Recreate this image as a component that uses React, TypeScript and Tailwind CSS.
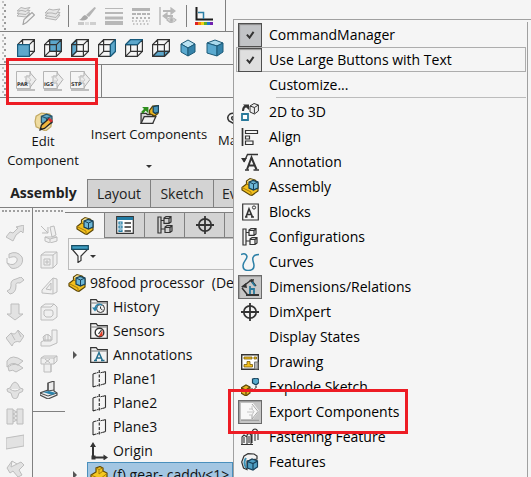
import type { ReactNode } from 'react';

const INK = '#333333';

interface IconProps {
  size?: number;
  children: ReactNode;
}

function Icon({ size = 18, children }: IconProps) {
  return (
    <svg
      width={size}
      height={size}
      viewBox="0 0 18 18"
      fill="none"
      stroke={INK}
      strokeWidth="1.2"
      className="shrink-0"
      aria-hidden="true"
    >
      {children}
    </svg>
  );
}

/* ---------- faded toolbar icons ---------- */

const sheets = (
  <g stroke="#b4b4b4" fill="#e6e6e6" strokeWidth="1">
    <path d="M1 11l5-4 10 1-4 5z" />
    <path d="M1 8.500l5-4 10 1-4 5z" />
    <path d="M1 6l4-4 4 1 7-1-4 5-4-1z" />
  </g>
);

const sheetsEdit = (
  <>
    <g stroke="#b4b4b4" fill="#e6e6e6" strokeWidth="1">
      <path d="M0 9l4-4 9 1-4 4z" />
      <path d="M0 6.500l4-4 9 1-4 4z" />
      <path d="M0 4l4-3.500 4 1 5-1-4 4-4-1z" />
    </g>
    <path d="M6 17.500l1-5 8-7 2.500 2.500-8 7.500z" stroke="#a4a4a4" fill="#f5f5f5" />
  </>
);

const brush = (
  <g stroke="none">
    <path d="M16.500 0l1.500 1-7 9-3-2z" fill="#b4b4b4" />
    <path d="M7 8l3 2c0 3-4 4-9 3 3-1 3-4 6-5z" fill="#a8a8a8" />
    <path d="M0 15h6v3H0z" fill="#c8c8c8" />
    <path d="M7 15h4v3H7z" fill="#dcdcdc" />
    <path d="M12 15h6v3h-6z" fill="#cfcfcf" />
  </g>
);

const lineWeights = (
  <g stroke="#b8b8b8">
    <path d="M0 1.500h18" strokeWidth="1" />
    <path d="M0 6h18" strokeWidth="2" />
    <path d="M0 11h18" strokeWidth="3" />
    <path d="M0 16h18" strokeWidth="4" />
  </g>
);

const lineStyles = (
  <g stroke="#b4b4b4">
    <path d="M0 2.500h18" strokeWidth="3" />
    <path d="M0 7h18" strokeWidth="2" strokeDasharray="4 1" />
    <path d="M0 11h18" strokeWidth="2" strokeDasharray="2 2" />
    <path d="M0 14h18M1 17h16" strokeWidth="1.500" strokeDasharray="1.500 2" />
  </g>
);

const hideShow = (
  <g stroke="#b8b8b8">
    <path d="M1 0v18" strokeWidth="1.500" />
    <path d="M4 4h9M5 9h9" strokeWidth="2" />
    <path d="M12 1l4 3-4 3zM8 6L4 9l4 3z" fill="#b8b8b8" />
    <path d="M8 13q4-5 9 0-4 5-9 0z" fill="#e2e2e2" />
    <circle cx="12.500" cy="13" r="1.500" fill="#b0b0b0" />
  </g>
);

const colorDisplay = (
  <>
    <path d="M1.500 0v12.500H18" stroke="#1d1d1d" strokeWidth="2" />
    <path d="M3 5.500h5.500V12" stroke="#2b7fa6" strokeWidth="1.500" />
    <g stroke="none">
      <path d="M0 15h3v3H0z" fill="#e02020" />
      <path d="M3 15h3v3H3z" fill="#f08010" />
      <path d="M6 15h3v3H6z" fill="#f0d010" />
      <path d="M9 15h3v3H9z" fill="#58b030" />
      <path d="M12 15h3v3h-3z" fill="#2074d0" />
      <path d="M15 15h3v3h-3z" fill="#7020b0" />
    </g>
  </>
);

/* ---------- view orientation cubes ---------- */

const CUBE_EDGES =
  'M.600 5.600h11.800v11.800H.600zM5.600.600h11.800v11.800H5.600zM.600 5.600l5-5M12.400 5.600l5-5M12.400 17.400l5-5M.600 17.400l5-5';

// faces turned to the viewer cover the edges behind them
function ViewCube({ face, behind }: { face: string; behind?: boolean }) {
  return (
    <Icon>
      {behind && <path d={face} fill="#5da7cb" stroke="#175a7c" />}
      <path d={CUBE_EDGES} />
      {!behind && <path d={face} fill="#5da7cb" stroke="#175a7c" />}
    </Icon>
  );
}

const views = [
  { name: 'Front', face: 'M.600 5.600h11.800v11.800H.600z' },
  { name: 'Back', face: 'M5.600.600h11.800v11.800H5.600z', behind: true },
  { name: 'Left', face: 'M.600 5.600l5-5v11.800l-5 5z', behind: true },
  { name: 'Right', face: 'M12.400 5.600l5-5v11.800l-5 5z' },
  { name: 'Top', face: 'M.600 5.600l5-5h11.800l-5 5z' },
  { name: 'Bottom', face: 'M.600 17.400l5-5h11.800l-5 5z', behind: true },
];

const isoCube = (
  <g stroke="#1d5a78" strokeWidth="1">
    <path d="M9 1l7 4-7 4-7-4z" fill="#b9e2f2" />
    <path d="M2 5l7 4v8l-7-4z" fill="#5aa9cf" />
    <path d="M16 5L9 9v8l7-4z" fill="#3583aa" />
  </g>
);

const dimetricCube = (
  <g stroke="#1d5a78" strokeWidth="1">
    <path d="M1 4l8-3 8 3-6 3z" fill="#a9d9ec" />
    <path d="M1 4l10 3v10L1 14z" fill="#5aa9cf" />
    <path d="M17 4l-6 3v10l6-4z" fill="#3583aa" />
  </g>
);

/* ---------- assembly and tree icons ---------- */

const assembly = (
  <>
    <path d="M1 9.500L5.500 6V3L9 .700l5 1.300 3 3v8l-6 4.300-2-.300-8-5z" fill="#f3c01d" stroke="#5c4708" />
    <path d="M1 9.500l9 4.500v3M5.500 6l3 1.500" stroke="#a87c0b" strokeWidth="1" />
    <path d="M6 3.500L9 1.300l4 .700-4 1.500v3.500z" fill="#fbe7a0" stroke="none" />
    <path d="M8 4l4-1.500L17 4v6l-4.500 2L8 10z" fill="#6db7d6" stroke="#17415a" />
    <path d="M8 4l4.500 2L17 4M12.500 6v6" stroke="#17415a" strokeWidth="1" />
  </>
);

const part = (
  <>
    <path d="M1 9l5-3V2l4-1.500L13 2v3l4 2v5l-7 5-9-4.500z" fill="#f5c81f" stroke="#5c4708" />
    <path d="M1 9l9 4v4M10 13l7-5.500M6 2l3 1.500L13 2M9 3.500V8l4-3" stroke="#a87c0b" strokeWidth="1" />
  </>
);

const folder = <path d="M.700 16.300V1.700h5.500l1.500 2h9.600v12.600z" fill="#f2f2f2" />;

const historyFolder = (
  <>
    {folder}
    <path d="M.700 5h16.600" stroke="#8d8d8d" />
    <circle cx="10.500" cy="10.500" r="4" strokeWidth="1" />
    <path d="M10.500 8.500v2l2 1.500" strokeWidth="1" />
    <path d="M12 7Q7 4.500 5 10" stroke="#2c84ad" strokeWidth="1.600" />
    <path d="M2 9.500h6l-3 4z" fill="#2c84ad" stroke="none" />
  </>
);

const sensorFolder = (
  <>
    {folder}
    <path d="M.700 5h16.600" stroke="#8d8d8d" />
    <circle cx="9.500" cy="10.500" r="4.300" fill="#fff" strokeWidth="1.400" />
    <path d="M12.500 8v6l-4 .500z" fill="#e03a22" stroke="none" />
    <path d="M8.500 12l3-4" />
  </>
);

const annotationFolder = (
  <>
    {folder}
    <path d="M.700 5h16.600" stroke="#8d8d8d" />
    <path d="M5.500 14.500L9 6.500l3.500 8M7 12h4M4 14.500h3M11 14.500h3.500" stroke="#24708f" strokeWidth="1.500" />
  </>
);

const plane = (
  <>
    <path d="M3 4v13M3 4l3-1M3 17l3-1M15.500 1.500v12M15.500 1.500l-3 1M15.500 13.500l-3 1" strokeWidth="1.100" />
    <path d="M9.300 0v18" strokeDasharray="3 1.500" />
    <path d="M6.500 3l2-.700M6.500 16l2-.700M10.500 2.800l2-.600M10.500 15l2-.600" strokeWidth="1" />
  </>
);

const origin = (
  <>
    <path d="M3 3v12.500h11" strokeWidth="2" />
    <path d="M0 5l3-5 3 5zM13.500 12.500l4.500 3-4.500 3zM1.500 13.500h4v4h-4z" fill={INK} stroke="none" />
  </>
);

const propertySheet = (
  <>
    <path d="M.700.700h16.600v16.600H.700z" fill="#fff" />
    <path d="M1 1h16v3H1z" fill="#217ba3" stroke="none" />
    <path d="M3 6h3v2H3zM3 10h3v2H3zM3 14h3v1.500H3z" stroke="#217ba3" />
    <path d="M8.500 7h6.500M8.500 11h6.500M8.500 15h6.500" strokeWidth="1.400" />
  </>
);

const configurations = (
  <>
    <path d="M2 1h3v16H2zM5 4.500h3M5 13h4" />
    <path d="M8 2l2-1.300h5V6l-2 1.300H8zM8 2.500h5v4.500M13 2.500L15 1" />
    <path d="M9 11l2-1.300h5V15l-2 1.500H9zM9 11.500h5v5M14 11.500l2-1.500" />
  </>
);

const target = (
  <>
    <circle cx="9" cy="9" r="6.200" strokeWidth="1.700" />
    <path d="M9 0v18M0 9h18" strokeWidth="1.800" />
  </>
);

const funnel = (
  <>
    <path d="M1 4l6 7v6.500l3-2V11l7-7z" fill="#fafafa" />
    <path d="M.700.700h16.600v3.600H.700z" fill="#3d9cc0" stroke="#174a60" />
  </>
);

/* ---------- command manager icons ---------- */

const editComponent = (
  <>
    <path d="M1 9l1-5 5-3 8 1 2 4-1 8-5 4-9-4z" fill="#efdca0" stroke="#c3aa63" />
    <path d="M7 4l5-2 5 2v6l-5 3-5-3z" fill="#63abc9" stroke="#28566c" />
    <path d="M7 4l5 2 5-2M12 6v6" stroke="#28566c" />
    <path d="M6 16.500l1-4 7-6 3 3-7 6z" fill="#efb73d" stroke="#222" />
    <path d="M13 7l2-1.500 3 3-2 1.500z" fill="#d93030" stroke="none" />
    <path d="M5 18l1-3.500 2.500 2z" fill="#222" stroke="none" />
  </>
);

const insertComponent = (
  <>
    <path d="M1 8v9.500h11V9H7L6 8z" fill="#d2d2d2" />
    <path d="M1 17.500L4 11h11l-3 6.500z" fill="#f2f2f2" />
    <path d="M2 7.500L5 4" stroke="#2f8f1e" strokeWidth="2.400" />
    <path d="M2 2h6v6z" fill="#2f8f1e" stroke="none" />
    <path d="M9 5l3-4 5-.400V8l-3 2.500L9 8z" fill="#eeb722" stroke="#5c4708" />
    <path d="M12.500 1.500L17.500.600v6l-3 1.400-2-1.500z" fill="#4a97ba" stroke="#17415a" />
  </>
);

const mate = (
  <path
    d="M14 15L3 9Q0 5 4 2q4-2 7 2l5 6M13 14L6 7Q5 4 8 5l4 5"
    strokeWidth="1.500"
  />
);

/* ---------- popup menu icons ---------- */

const twoToThree = (
  <>
    <path d="M1 11h6v6H1z" fill="#fff" stroke="#28799b" strokeWidth="1.800" />
    <path d="M2 8q0-4 3-5" strokeWidth="2" />
    <path d="M2 1.500h6V7z" fill={INK} stroke="none" />
    <path d="M9 3l4-2.500L17.400 2v6l-4 3L9 9zM9 3l4.400 1.500v6M13.400 4.500l4-2.500" strokeWidth="1" fill="#eee" />
  </>
);

const align = (
  <>
    <path d="M1.500 0v18" strokeWidth="1.700" />
    <path d="M4.500 2.500h12v3h-12zM4.500 8h4v3h-4zM4.500 13h7.500v3.500H4.500z" />
  </>
);

const annotation = (
  <>
    <path d="M3 9L6.500 1.500H17" strokeWidth="1.400" />
    <path d="M0 5h6L3 9.500z" fill={INK} stroke="none" />
    <path d="M6 16.500L10.500 4.500l5 12M8 12.500h6" strokeWidth="2" />
    <path d="M4 17h4M12.500 17H18" strokeWidth="1.500" />
  </>
);

const blocks = (
  <>
    <path d="M1.700 1h15.600v16H1.700z" />
    <path d="M5 14l3-8 3.500 8M6 11.500h4M4 14h2.500M10 14h3" strokeWidth="1.600" />
    <circle cx="13" cy="4.500" r="1.600" strokeWidth="1" />
  </>
);

const curves = (
  <path
    d="M0 1.500q5-2 6 2c0 3-4 5-4 9q0 5 5 5 6 0 6-5c0-3-2-5-1-8q1-3 6-3"
    stroke="#2b7fa6"
    strokeWidth="1.500"
  />
);

const dimensions = (
  <>
    <path d="M1 9l10-7.500M1 10l6 7.500M10 2l5 6" strokeWidth="1.500" />
    <path d="M0 9l5-4 1 5zM8 2l5-1-1 5z" fill={INK} stroke="none" />
    <path d="M11 4l3 4M9 8v8M9 11h4v5" stroke="#28799b" strokeWidth="1.800" />
    <path d="M5 17h13" strokeWidth="2" />
  </>
);

const drawing = (
  <>
    <path d="M.700 1.700h16.600v14.600H.700z" fill="#fff" strokeWidth="1.400" />
    <path d="M3 4h8v2H3zM13 4h2.500v2H13z" fill="#f3c01d" stroke="#7a5c07" strokeWidth=".8" />
    <path d="M6 8.500h3v3h2.500V14H3v-2.500h3z" fill="#f3c01d" stroke="#7a5c07" strokeWidth=".8" />
    <path d="M13.500 9H17v7h-3.500z" fill="#b5b5b5" stroke="#777" strokeWidth="1" />
  </>
);

const explode = (
  <>
    <path d="M0 10l5-3 4 2v6l-4 3-5-3z" fill="#e7b322" stroke="#5c4708" />
    <path d="M0 10l5 2 4-3M5 12v5" stroke="#5c4708" />
    <path d="M11.500 1l4-1L18 1.500v3L15 7l-3.500-2z" fill="#57a9cd" stroke="#17415a" />
    <path d="M15 8v3H9" strokeDasharray="2 1" />
  </>
);

const exportArrow = (
  <>
    <path d="M0 0h12l6 8-6 8H0z" fill="#f8f8f8" stroke="none" />
    <path d="M11 1l6 7.500-6 7.500v-4" stroke="#a5a5a5" strokeWidth="1" />
    <path d="M8 6h4M6 9h7M11 3v3l2 2.500-2 3.500H8" stroke="#c4c4c4" strokeWidth="1" />
    <path d="M0 17.500h18" stroke="#a0a0a0" strokeWidth="1.500" />
  </>
);

const fastening = (
  <>
    <path d="M1 16V9l2-2 3 2v7M6 16V7l2-2 2 2v9M11 15V4q1-3 3-3t3 3v8M14 13V4M3 15V9M8 15V8" strokeWidth="1.100" />
    <path d="M0 16.500h12" strokeWidth="1" />
  </>
);

const features = (
  <>
    <path d="M3 3l4-2.300 6 .300 3 2v3L6 8v8.500L2.500 15 .700 9z" fill="#f2f2f2" />
    <path d="M5 5q-3 4 0 10" stroke="#3b91b5" strokeWidth="2" />
    <path d="M6.500 8.500L11 6l5.500 2v6L12 17l-5.500-2z" fill="#4f9fc3" stroke="#17415a" />
    <path d="M6.500 8.500L12 10.500l4.500-2.500M12 10.500v6" stroke="#17415a" />
  </>
);

const check = <path d="M5.500 8.500l3 3.500 4.500-6.500" strokeWidth="2.200" />;

/* ---------- faded side toolbars ---------- */

const FADED = '#bdbdbd';

const featureTools: { name: string; art: ReactNode }[] = [
  { name: 'Extrude', art: <path d="M0 12l4-5 3 1 5-5-2-1 8-2-1 8-2-2-5 4-3 6z" /> },
  { name: 'Revolve', art: <path d="M3 3q8-4 13 3c3 8-6 13-11 11l-4-5q7 4 10-2c1-5-4-5-8-3zM1 12V7" /> },
  { name: 'Sweep', art: <path d="M1 14q4-1 4-5-1-6 5-7l5-2 3 3-4 3q-5-1-4 3 0 7-6 8z" /> },
  { name: 'Loft', art: <path d="M5 1h8v10h4l-8 6-8-6h4z" /> },
  { name: 'Boundary', art: <path d="M0 9l5-5q4 3 7-3l6 6-4 6q-6-2-8 4zM5 4l4 7M12 2l3 6" /> },
  { name: 'Wrap', art: <path d="M1 6q5-8 16 0l-5 4Q6 6 1 12zM2 12q7-6 15 1l-7 4q-3-3-7-1z" /> },
  { name: 'Dome', art: <path d="M4 7q5-12 10 0l3 1q1 3-4 4-1 6-4 6t-4-6Q0 11 1 8zM4 8q5 4 10 0" /> },
  { name: 'Zip', art: <path d="M1 2h6v15H1zM11 2h6v15h-6zM7 3l4 2-4 2 4 2-4 2 4 2-4 2" /> },
  { name: 'Planar', art: <path d="M0 5l18-3v11L0 16z" /> },
  { name: 'Sweep cut', art: <path d="M1 9l5-7 5 3 4-2 3 3-5 5 3 5-4 2-5-6-3 2zM6 2l-1 6 6-3" /> },
];

const assemblyTools: { name: string; art: ReactNode }[] = [
  { name: 'Smart fasteners', art: <path d="M1 1l7 7M8 2v6H2M10 2l4-1 2 9-4 2zM5 12h12v4l-7 2-5-2zM5 12l5 2 7-2M10 14v3" /> },
  { name: 'Shell', art: <path d="M1 4l4-3h12v12l-4 4H1zM1 4h12l4-3M13 4v13M4 8h6v6H4zM6 10h2v2H6z" /> },
  { name: 'Rib', art: <path d="M2 13L13 1l4 1v13l-4 2-11-1zM13 1v16M6 12l5-6v7z" /> },
  { name: 'Hole', art: <path d="M1 4l4-3h9l3 3v10l-4 3H1zM1 4h10l3-3M5 7h6q2 0 2 2v3l-2 2H6l-2-2V8z" /> },
  { name: 'Mirror', art: <path d="M12 1h5v13l-7 3H1v-4l4-2h7zM3 8q4-5 8 0v4H4zM5 6v6M8 5v7" /> },
  { name: 'Pattern', art: <path d="M1 3l3-2h13v5l-3 3h-3v8H4V9H1zM1 3h13v6M14 3l3-2M5 4l5 4M10 4L5 8M4 9h7v8" /> },
];

const bracket = (
  <>
    <path d="M8 2l6-2v10l3 2v2l-9 4-8-4v-2l8-3z" fill="#ececec" stroke="#4b4b4b" />
    <path d="M8 2v8l6-1M0 12l8 3 9-3" stroke="#4b4b4b" strokeWidth="1" />
    <path d="M3 11l9 3 4-2-7-2z" fill="#2c84ad" stroke="none" />
  </>
);

/* ---------- window parts ---------- */

function Grip() {
  return (
    <div className="flex w-1 shrink-0 flex-col justify-around self-stretch py-px" aria-hidden="true">
      {[0, 1, 2, 3, 4].map(i => (
        <div key={i} className="flex flex-col gap-px">
          <div className="size-0.5 bg-[#c4c4c4]" />
          <div className="size-0.5 self-end bg-[#999]" />
        </div>
      ))}
    </div>
  );
}

function SideGrip() {
  return <div className="mx-auto h-0.5 w-7 border-t-2 border-dotted border-[#a0a0a0]" />;
}

function Tool({ name, children }: { name: string; children: ReactNode }) {
  return (
    <button type="button" aria-label={name} className="flex shrink-0 items-center justify-center">
      {children}
    </button>
  );
}

function Divider() {
  return <div className="h-[22px] w-px shrink-0 bg-[#808080]" />;
}

function ExportTool({ label }: { label: string }) {
  return (
    <Tool name={`Export ${label}`}>
      <svg width="21" height="21" viewBox="0 0 21 21" fill="none" aria-hidden="true">
        <path d="M.500.500h14v17H.500z" fill="#f5f5f5" stroke="#b5b5b5" />
        <path d="M10 5h4V1.500l6 7-6 8V12h-4z" fill="#ededed" stroke="#b0b0b0" />
        <path d="M8 6h5M9 10h5M11 4l4 5-4 4" stroke="#cccccc" />
        <path d="M1 19h18" stroke="#ababab" strokeWidth="1.500" />
        <text x="1" y="15" fontSize="5" fontWeight="700" fill="#333" fontFamily="DejaVu Sans, sans-serif">
          {label}
        </text>
      </svg>
    </Tool>
  );
}

function Toolbars() {
  return (
    <>
      <div className="flex h-8 shrink-0 items-center border-b border-[#808080] pl-0.5">
        <Grip />
        <div className="flex h-full items-center border-r border-[#808080] pr-3 pl-[11px]">
          <div className="flex items-center gap-[9px] pr-1.5">
            <Tool name="Edit layers"><Icon>{sheetsEdit}</Icon></Tool>
            <Tool name="Layers"><Icon>{sheets}</Icon></Tool>
          </div>
          <Divider />
          <div className="flex items-center gap-[9px] px-[9px]">
            <Tool name="Line color"><Icon>{brush}</Icon></Tool>
            <Tool name="Line thickness"><Icon>{lineWeights}</Icon></Tool>
            <Tool name="Line style"><Icon>{lineStyles}</Icon></Tool>
            <Tool name="Hide or show edges"><Icon>{hideShow}</Icon></Tool>
          </div>
          <Divider />
          <div className="pl-2">
            <Tool name="Color display mode"><Icon>{colorDisplay}</Icon></Tool>
          </div>
        </div>
      </div>

      <div className="flex h-[33px] shrink-0 items-center border-b border-[#808080] pl-0.5">
        <Grip />
        <div className="flex items-center gap-[9px] pl-[11px]">
          {views.map(v => (
            <Tool key={v.name} name={v.name}><ViewCube face={v.face} behind={v.behind} /></Tool>
          ))}
          <Tool name="Isometric"><Icon>{isoCube}</Icon></Tool>
          <Tool name="Dimetric"><Icon>{dimetricCube}</Icon></Tool>
        </div>
      </div>

      <div className="flex h-[33px] shrink-0 items-center border-b border-[#808080] pl-0.5">
        <Grip />
        <div className="flex h-full w-24 items-center gap-1.5 border-r border-[#808080] pl-2.5">
          <ExportTool label="PAR" />
          <ExportTool label="IGS" />
          <ExportTool label="STP" />
        </div>
      </div>
    </>
  );
}

function CommandManager() {
  return (
    <>
      <div className="flex h-[81px] shrink-0 items-start text-[13px]">
        <button type="button" className="flex w-[86px] shrink-0 flex-col items-center pt-3.5 leading-[19px]">
          <Icon size={19}>{editComponent}</Icon>
          <span className="pt-px">Edit</span>
          <span>Component</span>
        </button>
        <button type="button" className="flex h-full w-[126px] shrink-0 flex-col items-center pt-[7px] leading-5">
          <Icon size={19}>{insertComponent}</Icon>
          <span className="whitespace-nowrap">Insert Components</span>
          <span className="mt-[21px] border-x-[3px] border-t-[3px] border-x-transparent border-t-[#333]" />
        </button>
        <button type="button" className="flex flex-col items-start pt-3.5 pl-1.5 leading-[19px]">
          <span className="pl-2"><Icon>{mate}</Icon></span>
          <span className="pt-px">Mate</span>
        </button>
      </div>

      <div role="tablist" className="flex h-[29px] shrink-0 border-b border-[#808080]">
        <button type="button" role="tab" aria-selected="true" className="w-[87px] shrink-0 font-bold text-[#222]">
          Assembly
        </button>
        {['Layout', 'Sketch', 'Evaluate'].map(name => (
          <button
            key={name}
            type="button"
            role="tab"
            aria-selected="false"
            className="min-w-[63px] shrink-0 border-t border-l border-[#808080] bg-[#d3d3d3] px-2 text-[#222]"
          >
            {name}
          </button>
        ))}
      </div>
    </>
  );
}

interface TreeRowProps {
  icon: ReactNode;
  label: string;
  arrow?: boolean;
  selected?: boolean;
}

function TreeRow({ icon, label, arrow, selected }: TreeRowProps) {
  return (
    <li className="flex h-6 items-center">
      <span className="flex w-[22px] shrink-0 pl-2">
        {arrow && (
          <span className="border-y-4 border-l-4 border-y-transparent border-l-[#555]" />
        )}
      </span>
      <span
        className={
          selected
            ? 'flex h-[26px] grow items-center gap-[5px] border border-[#4a90bd] bg-[#a3c6e2] pl-0.5'
            : 'flex h-6 grow items-center gap-[5px] pl-[3px]'
        }
      >
        <Icon>{icon}</Icon>
        <span className="whitespace-pre">{label}</span>
      </span>
    </li>
  );
}

const treeRows: TreeRowProps[] = [
  { icon: historyFolder, label: 'History' },
  { icon: sensorFolder, label: 'Sensors' },
  { icon: annotationFolder, label: 'Annotations', arrow: true },
  { icon: plane, label: 'Plane1' },
  { icon: plane, label: 'Plane2' },
  { icon: plane, label: 'Plane3' },
  { icon: origin, label: 'Origin' },
  { icon: part, label: '(f) gear- caddy<1>', arrow: true, selected: true },
];

const managerTabs = [
  { name: 'Property manager', art: propertySheet },
  { name: 'Configuration manager', art: configurations },
  { name: 'DimXpert manager', art: target },
  { name: 'Display manager', art: null },
];

function FeatureManager() {
  return (
    <div className="flex min-w-0 grow flex-col pt-1">
      <div role="tablist" className="flex h-[26px] shrink-0 border-t border-[#808080]">
        <button type="button" role="tab" aria-label="Feature manager" aria-selected="true" className="flex w-[39px] shrink-0 items-center justify-center">
          <Icon>{assembly}</Icon>
        </button>
        {managerTabs.map(tab => (
          <button
            key={tab.name}
            type="button"
            role="tab"
            aria-label={tab.name}
            aria-selected="false"
            className="flex w-10 shrink-0 items-center justify-center border-b border-l border-[#808080] bg-[#d3d3d3]"
          >
            {tab.art && <Icon>{tab.art}</Icon>}
          </button>
        ))}
      </div>

      <div className="ml-[3px] flex h-8 shrink-0 items-center border-y border-l border-[#bcbcbc] pl-0.5">
        <button type="button" aria-label="Filter" className="flex items-center gap-px">
          <Icon>{funnel}</Icon>
          <span className="mt-1 border-x-[3px] border-t-[3px] border-x-transparent border-t-[#333]" />
        </button>
      </div>

      <div className="flex h-[25px] shrink-0 items-center gap-1 pt-px pl-[3px]">
        <Icon>{assembly}</Icon>
        <span className="whitespace-pre">98food processor  (Default)</span>
      </div>
      <ul>
        {treeRows.map(row => (
          <TreeRow key={row.label} {...row} />
        ))}
      </ul>
    </div>
  );
}

function SideToolbars() {
  return (
    <>
      <div className="flex w-[33px] shrink-0 flex-col border-r border-[#808080] pt-0.5">
        <SideGrip />
        <div className="flex flex-col items-center gap-2 pt-[13px] pr-0.5">
          {featureTools.map(t => (
            <Tool key={t.name} name={t.name}>
              <Icon>
                <g stroke={FADED} fill="#e2e2e2" strokeWidth="1">{t.art}</g>
              </Icon>
            </Tool>
          ))}
        </div>
      </div>
      <div className="w-8 shrink-0 pt-0.5">
        <SideGrip />
        <div className="flex flex-col items-center gap-2 border-b border-[#808080] pt-[13px] pb-3">
          {assemblyTools.map(t => (
            <Tool key={t.name} name={t.name}>
              <Icon>
                <g stroke={FADED} fill="#efefef" strokeWidth="1">{t.art}</g>
              </Icon>
            </Tool>
          ))}
          <Tool name="Bracket"><Icon>{bracket}</Icon></Tool>
        </div>
      </div>
    </>
  );
}

function CheckRow({ label, highlighted }: { label: string; highlighted?: boolean }) {
  return (
    <label
      className={
        highlighted
          ? 'mr-px ml-0.5 flex h-[25px] items-center border border-[#adadad] pl-px'
          : 'mr-px ml-0.5 flex h-[25px] items-center pl-0.5'
      }
    >
      <span className="relative flex size-6 shrink-0">
        <input
          type="checkbox"
          defaultChecked
          className={
            highlighted
              ? 'size-6 appearance-none border border-[#4f4f4f] bg-[#dfdfdf] shadow-[inset_1px_1px_1px_#999]'
              : 'size-6 appearance-none border border-[#4f4f4f] bg-[#c1c3c6] shadow-[inset_1px_1px_1px_#888]'
          }
        />
        <span className="pointer-events-none absolute inset-0 flex items-center justify-center">
          <Icon size={16}>{check}</Icon>
        </span>
      </span>
      <span className="pl-[7px]">{label}</span>
    </label>
  );
}

interface MenuRow {
  label: string;
  icon?: ReactNode;
  pressed?: boolean;
}

const menuRows: MenuRow[] = [
  { label: '2D to 3D', icon: twoToThree },
  { label: 'Align', icon: align },
  { label: 'Annotation', icon: annotation },
  { label: 'Assembly', icon: assembly },
  { label: 'Blocks', icon: blocks },
  { label: 'Configurations', icon: configurations },
  { label: 'Curves', icon: curves },
  { label: 'Dimensions/Relations', icon: dimensions, pressed: true },
  { label: 'DimXpert', icon: target },
  { label: 'Display States' },
  { label: 'Drawing', icon: drawing },
  { label: 'Explode Sketch', icon: explode },
  { label: 'Export Components', icon: exportArrow, pressed: true },
  { label: 'Fastening Feature', icon: fastening },
  { label: 'Features', icon: features },
];

function MenuItem({ label, icon, pressed }: MenuRow) {
  return (
    <button type="button" role="menuitem" className="flex h-[25px] w-full items-center pl-1 text-left">
      <span
        className={
          pressed
            ? 'flex size-6 shrink-0 items-center justify-center border border-[#6a6a6a] bg-[#c6c6c6] shadow-[inset_1px_1px_1px_#999]'
            : 'flex size-6 shrink-0 items-center justify-center'
        }
      >
        {icon && <Icon>{icon}</Icon>}
      </span>
      <span className="pl-[7px]">{label}</span>
    </button>
  );
}

function ToolbarMenu() {
  return (
    <div className="mt-[19px] min-w-0 grow overflow-hidden border-t border-l border-[#a0a0a0] pt-0.5 pr-[3px] text-black">
      <div className="h-full border-r border-[#a0a0a0]">
        <CheckRow label="CommandManager" />
        <CheckRow label="Use Large Buttons with Text" highlighted />
        <MenuItem label="Customize..." />
        <div className="mr-px mb-px ml-[42px] h-px bg-[#bcbcbc]" />
        {menuRows.map(row => (
          <MenuItem key={row.label} {...row} />
        ))}
      </div>
    </div>
  );
}

export default function App() {
  return (
    <div className="relative flex h-screen overflow-hidden bg-[#f5f5f5] font-['Open_Sans','Noto_Sans',sans-serif] text-sm text-[#111]">
      <div className="flex w-[233px] shrink-0 flex-col overflow-hidden">
        <Toolbars />
        <CommandManager />
        <div className="flex min-h-0 grow">
          <SideToolbars />
          <FeatureManager />
        </div>
      </div>

      <ToolbarMenu />

      {/* callouts drawn over the window */}
      <div className="pointer-events-none absolute top-[58px] left-1.5 h-[47px] w-[92px] border-3 border-[#ed1c24]" />
      <div className="pointer-events-none absolute top-[389px] left-[228px] h-[45px] w-[180px] border-3 border-[#ed1c24]" />
    </div>
  );
}
